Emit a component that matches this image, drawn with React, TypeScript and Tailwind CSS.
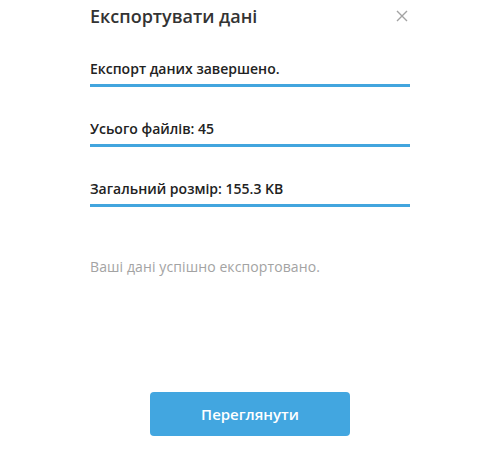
export default function App() {
  const rows = ["Експорт даних завершено.", "Усього файлів: 45", "Загальний розмір: 155.3 KB"]

  return (
    <div className="w-[487px] h-[457px] bg-white font-['Open_Sans',sans-serif]">
      <div className="ml-[90px] w-[320px] pt-1">
        <div className="flex items-center justify-between">
          <h1 className="text-[18px] leading-6 font-semibold text-[#333]">Експортувати дані</h1>
          <svg width="12" height="12" viewBox="0 0 12 12" className="mr-[2px]">
            <path d="M1 1L11 11M11 1L1 11" stroke="#a3a3a3" strokeWidth="1.4" />
          </svg>
        </div>

        <div className="mt-[31px] flex flex-col gap-8">
          {rows.map((row) => (
            <div key={row} className="pb-[5px] border-b-[3px] border-[#42a5de]">
              <div className="text-[14px] leading-5 font-semibold text-[#222]">{row}</div>
            </div>
          ))}
        </div>

        <p className="mt-[50px] text-[14px] leading-5 tracking-[0.1px] text-[#a3a3a3]">Ваші дані успішно експортовано.</p>

        <div className="mt-[115px] flex justify-center">
          <button className="w-[200px] h-[44px] rounded bg-[#42a6e0] text-white text-[15px] font-semibold">
            Переглянути
          </button>
        </div>
      </div>
    </div>
  )
}
